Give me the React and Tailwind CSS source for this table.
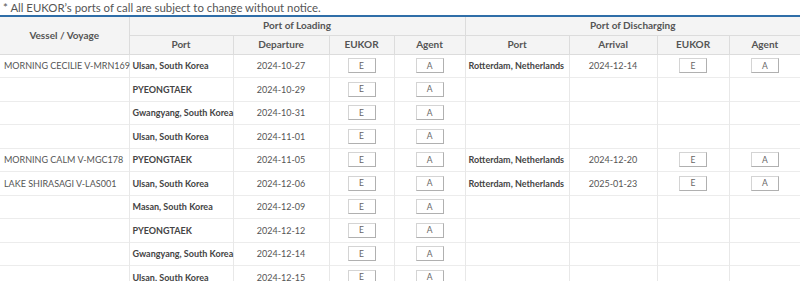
import React from 'react';

const rows = [
  { vessel: 'MORNING CECILIE V-MRN169', port: 'Ulsan, South Korea', dep: '2024-10-27', dPort: 'Rotterdam, Netherlands', arr: '2024-12-14' },
  { port: 'PYEONGTAEK', dep: '2024-10-29' },
  { port: 'Gwangyang, South Korea', dep: '2024-10-31' },
  { port: 'Ulsan, South Korea', dep: '2024-11-01' },
  { vessel: 'MORNING CALM V-MGC178', port: 'PYEONGTAEK', dep: '2024-11-05', dPort: 'Rotterdam, Netherlands', arr: '2024-12-20' },
  { vessel: 'LAKE SHIRASAGI V-LAS001', port: 'Ulsan, South Korea', dep: '2024-12-06', dPort: 'Rotterdam, Netherlands', arr: '2025-01-23' },
  { port: 'Masan, South Korea', dep: '2024-12-09' },
  { port: 'PYEONGTAEK', dep: '2024-12-12' },
  { port: 'Gwangyang, South Korea', dep: '2024-12-14' },
  { port: 'Ulsan, South Korea', dep: '2024-12-15' },
];

const Btn = ({ label }) => (
  <span className="inline-flex items-center justify-center w-[28px] h-[15px] bg-white border border-[#d4d4d4] border-r-[#b0b0b0] border-b-[#b0b0b0] text-[8.5px] leading-none text-[#666]">
    {label}
  </span>
);

const th = 'border border-[#dcdcdc] font-bold text-[10px] text-[#555] text-center align-middle';
const td = 'border-x border-[#e8e8e8] text-[9px] align-middle whitespace-nowrap';

export default function App() {
  return (
    <div className="w-[800px] bg-white" style={{ fontFamily: 'Lato, "Open Sans", sans-serif' }}>
      <div className="h-[15px] pl-[3px] text-[11.4px] leading-[15px] text-[#555]">
        * All EUKOR’s ports of call are subject to change without notice.
      </div>
      <table className="w-[800px] table-fixed border-collapse border-t-2 border-t-[#2f6ea8]">
        <colgroup>
          <col className="w-[129px]" />
          <col className="w-[104px]" />
          <col className="w-[96px]" />
          <col className="w-[65px]" />
          <col className="w-[71px]" />
          <col className="w-[104px]" />
          <col className="w-[88px]" />
          <col className="w-[72px]" />
          <col className="w-[71px]" />
        </colgroup>
        <thead className="bg-[#f4f4f4]">
          <tr className="h-[19px]">
            <th rowSpan={2} className={th + ' border-l-0'}>Vessel / Voyage</th>
            <th colSpan={4} className={th}>Port of Loading</th>
            <th colSpan={4} className={th + ' border-r-0'}>Port of Discharging</th>
          </tr>
          <tr className="h-[19px]">
            <th className={th}>Port</th>
            <th className={th}>Departure</th>
            <th className={th}>EUKOR</th>
            <th className={th}>Agent</th>
            <th className={th}>Port</th>
            <th className={th}>Arrival</th>
            <th className={th}>EUKOR</th>
            <th className={th + ' border-r-0'}>Agent</th>
          </tr>
        </thead>
        <tbody>
          {rows.map((r, i) => (
            <tr key={i} className="h-[23.5px] border-b border-[#ececec]">
              <td className={td + ' border-l-0 pl-[4px] text-[#555]'}>{r.vessel || ''}</td>
              <td className={td + ' pl-[3px] font-bold text-[#444]'}>{r.port}</td>
              <td className={td + ' text-center text-[#555]'}>{r.dep}</td>
              <td className={td + ' text-center'}><Btn label="E" /></td>
              <td className={td + ' text-center'}><Btn label="A" /></td>
              <td className={td + ' pl-[3px] font-bold text-[#444]'}>{r.dPort || ''}</td>
              <td className={td + ' text-center text-[#555]'}>{r.arr || ''}</td>
              <td className={td + ' text-center'}>{r.dPort ? <Btn label="E" /> : null}</td>
              <td className={td + ' border-r-0 text-center'}>{r.dPort ? <Btn label="A" /> : null}</td>
            </tr>
          ))}
        </tbody>
      </table>
    </div>
  );
}
